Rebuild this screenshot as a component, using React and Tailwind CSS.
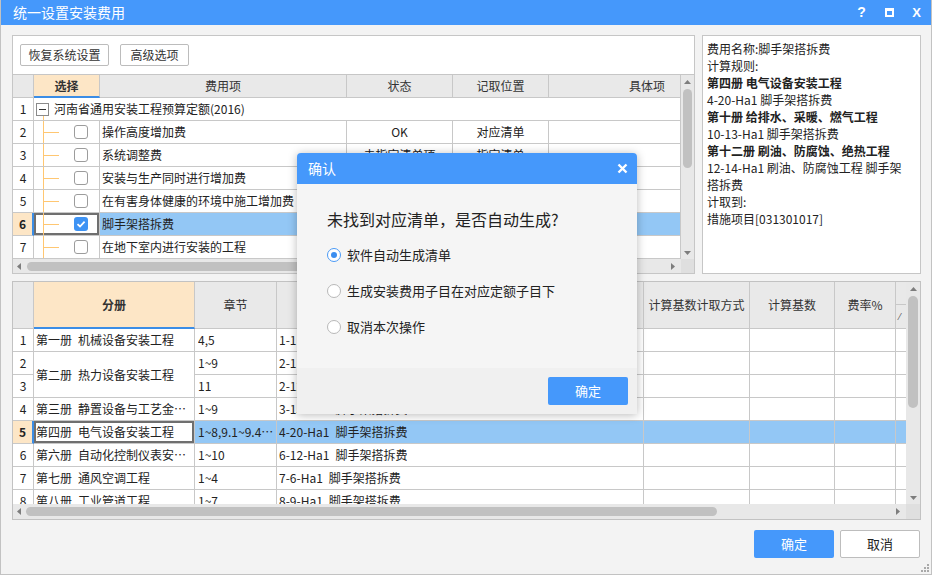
import React from "react";

const FONT = "font-['Noto_Sans_CJK_SC','Noto_Sans',sans-serif]";
const CELL = "border-r border-b border-[#c8c8c8] flex items-center overflow-hidden min-w-0";
const HEAD = "border-r border-b border-[#c8c8c8] flex items-center justify-center bg-[#e9e9e9] text-[#333]";
const ORANGE = "bg-[#fde6c6]";
const BLUE = "bg-[#93c7f5]";

function Tri({ dir }) {
  const pts = {
    up: "0,4 3.5,0 7,4",
    down: "0,0 7,0 3.5,4",
    left: "4,0 4,7 0,3.5",
    right: "0,0 0,7 4,3.5",
  }[dir];
  const v = dir === "up" || dir === "down";
  const w = v ? 7 : 4;
  const h = v ? 4 : 7;
  return (
    <svg width={w} height={h} viewBox={`0 0 ${w} ${h}`}>
      <polygon points={pts} fill="#7d7d7d" />
    </svg>
  );
}

function VScroll({ width, thumb }) {
  return (
    <div className={`${width} shrink-0 bg-[#e8e8e8] flex flex-col items-center`}>
      <div className="h-[13px] w-full flex items-center justify-center">
        <Tri dir="up" />
      </div>
      <div className="flex-1 w-full flex flex-col items-center">
        <div className={thumb} />
      </div>
      <div className="h-[13px] w-full flex items-center justify-center">
        <Tri dir="down" />
      </div>
    </div>
  );
}

function HScroll({ height, thumb, corner }) {
  return (
    <div className={`${height} shrink-0 flex`}>
      <div className="flex-1 bg-[#e8e8e8] flex items-center">
        <div className="w-[12px] flex justify-center">
          <Tri dir="left" />
        </div>
        <div className={thumb} />
        <div className="flex-1" />
        <div className="w-[16px] flex justify-center">
          <Tri dir="right" />
        </div>
      </div>
      <div className={`${corner} bg-[#dfdfdf]`} />
    </div>
  );
}

function Checkbox({ checked }) {
  if (checked) {
    return (
      <div className="w-[14px] h-[14px] rounded-[3px] bg-[#3e93f4] flex items-center justify-center shrink-0">
        <svg width="10" height="10" viewBox="0 0 10 10">
          <path d="M1.5 5.2 L4 7.5 L8.6 2.6" fill="none" stroke="white" strokeWidth="1.8" />
        </svg>
      </div>
    );
  }
  return <div className="w-[14px] h-[14px] rounded-[3px] border border-[#9c9c9c] bg-white shrink-0" />;
}

function Tree() {
  return (
    <svg width="26" height="23" className="shrink-0 self-start">
      <line x1="9.5" y1="0" x2="9.5" y2="23" stroke="#ffc772" />
      <line x1="9.5" y1="11.5" x2="25" y2="11.5" stroke="#ffc772" />
    </svg>
  );
}

function Radio({ on }) {
  if (on) {
    return (
      <div className="w-[14px] h-[14px] rounded-full border border-[#4a9af5] bg-white flex items-center justify-center shrink-0">
        <div className="w-[6px] h-[6px] rounded-full bg-[#3b8ef0]" />
      </div>
    );
  }
  return <div className="w-[14px] h-[14px] rounded-full border border-[#b8b8b8] bg-white shrink-0" />;
}

const upperRows = [
  { n: 2, name: "操作高度增加费", st: "OK", pos: "对应清单" },
  { n: 3, name: "系统调整费", st: "未指定清单项", pos: "指定清单" },
  { n: 4, name: "安装与生产同时进行增加费", st: "未指定清单项", pos: "指定清单" },
  { n: 5, name: "在有害身体健康的环境中施工增加费", st: "未指定清单项", pos: "指定清单" },
  { n: 6, name: "脚手架搭拆费", st: "", pos: "", sel: true },
  { n: 7, name: "在地下室内进行安装的工程", st: "未指定清单项", pos: "指定清单" },
];

function UpperTable() {
  return (
    <div className="w-[683px] h-[239px] shrink-0 border border-[#c6c6c6] bg-white flex flex-col">
      <div className="h-[38px] shrink-0 flex items-start pt-[8px] pl-[7px] gap-[11px]">
        <div className="w-[89px] h-[22px] border border-[#bcbcbc] rounded-[2px] bg-white flex items-center justify-center text-[#333]">
          恢复系统设置
        </div>
        <div className="w-[69px] h-[22px] border border-[#bcbcbc] rounded-[2px] bg-white flex items-center justify-center text-[#333]">
          高级选项
        </div>
      </div>
      <div className="h-[185px] shrink-0 flex border-t border-[#c6c6c6]">
        <div className="flex-1 overflow-hidden grid grid-cols-[21px_66px_247px_106px_96px_132px] auto-rows-[23px] content-start">
          <div className={HEAD} />
          <div className={`${HEAD} !bg-[#fde6c6] border-b-2 !border-b-[#3b8de6] font-bold`}>选择</div>
          <div className={HEAD}>费用项</div>
          <div className={HEAD}>状态</div>
          <div className={HEAD}>记取位置</div>
          <div className={`${HEAD} !justify-end pr-[15px]`}>具体项</div>

          <div className={`${CELL} justify-center`}>1</div>
          <div className={`${CELL} col-span-5 bg-white`}>
            <div className="relative w-[26px] h-full shrink-0 flex items-center">
              <svg width="26" height="22" className="absolute left-0 top-0">
                <line x1="9.5" y1="18" x2="9.5" y2="23" stroke="#ffc772" />
              </svg>
              <div className="relative ml-[2px] w-[13px] h-[13px] border border-[#8a8a8a] bg-white flex items-center justify-center">
                <div className="w-[7px] h-px bg-[#333]" />
              </div>
            </div>
            <span className="ml-[-6px]">河南省通用安装工程预算定额(2016)</span>
          </div>

          {upperRows.map((r) => (
            <React.Fragment key={r.n}>
              <div
                className={`${CELL} justify-center ${r.sel ? `${ORANGE} font-bold border-r-2 !border-r-[#3b8de6]` : "bg-white"}`}
              >
                {r.n}
              </div>
              <div className={`${CELL} bg-white ${r.sel ? "shadow-[inset_0_0_0_2px_#6f6f6f]" : ""}`}>
                <Tree />
                <div className="ml-[14px]">
                  <Checkbox checked={r.sel} />
                </div>
              </div>
              <div className={`${CELL} pl-[2px] whitespace-nowrap ${r.sel ? BLUE : "bg-white"}`}>{r.name}</div>
              <div className={`${CELL} justify-center whitespace-nowrap ${r.sel ? BLUE : "bg-white"}`}>{r.st}</div>
              <div className={`${CELL} justify-center whitespace-nowrap ${r.sel ? BLUE : "bg-white"}`}>{r.pos}</div>
              <div className={`${CELL} ${r.sel ? BLUE : "bg-white"}`} />
            </React.Fragment>
          ))}
        </div>
        <VScroll width="w-[13px]" thumb="mt-[1px] h-[79px] w-[9px] rounded-full bg-[#c1c1c1]" />
      </div>
      <HScroll
        height="h-[14px]"
        thumb="ml-[2px] w-[400px] h-[9px] rounded-full bg-[#c1c1c1]"
        corner="w-[13px]"
      />
    </div>
  );
}

function InfoPanel() {
  return (
    <div className="w-[219px] h-[239px] shrink-0 border border-[#c6c6c6] bg-white pt-[4px] pl-[4px] pr-[3px] text-[12px] leading-[17px] text-[#222]">
      <div>费用名称:脚手架搭拆费</div>
      <div>计算规则:</div>
      <div className="font-bold">第四册 电气设备安装工程</div>
      <div>4-20-Ha1 脚手架搭拆费</div>
      <div className="font-bold">第十册 给排水、采暖、燃气工程</div>
      <div>10-13-Ha1 脚手架搭拆费</div>
      <div className="font-bold">第十二册 刷油、防腐蚀、绝热工程</div>
      <div>
        12-14-Ha1 刷油、防腐蚀工程 脚手架
        <br />
        搭拆费
      </div>
      <div>计取到:</div>
      <div>措施项目[031301017]</div>
    </div>
  );
}

const lowerRows = [
  { n: 1, book: "第一册\u2002机械设备安装工程", ch: "4,5", item: "1-11-Ha1\u2002脚手架搭拆费" },
  { n: 2, book: "第二册\u2002热力设备安装工程", ch: "1~9", item: "2-11-Ha1\u2002脚手架搭拆费", span: true },
  { n: 3, book: null, ch: "11", item: "2-12-Ha1\u2002脚手架搭拆费" },
  { n: 4, book: "第三册\u2002静置设备与工艺金属结构制作安装工程", ch: "1~9", item: "3-15-Ha1\u2002脚手架搭拆费" },
  { n: 5, book: "第四册\u2002电气设备安装工程", ch: "1~8,9.1~9.4,10~14", item: "4-20-Ha1\u2002脚手架搭拆费", sel: true },
  { n: 6, book: "第六册\u2002自动化控制仪表安装工程", ch: "1~10", item: "6-12-Ha1\u2002脚手架搭拆费" },
  { n: 7, book: "第七册\u2002通风空调工程", ch: "1~4", item: "7-6-Ha1\u2002脚手架搭拆费" },
  { n: 8, book: "第八册\u2002工业管道工程", ch: "1~7", item: "8-9-Ha1\u2002脚手架搭拆费" },
];

const LCOLS = "grid grid-cols-[21px_161px_82px_367px_106px_85px_61px_10px]";

function LowerTable() {
  return (
    <div className="mt-[7px] w-[909px] h-[239px] shrink-0 border border-[#c2c2c2] bg-white flex flex-col">
      <div className="h-[222px] shrink-0 flex">
        <div className="flex-1 flex flex-col overflow-hidden">
          <div className={`${LCOLS} h-[47px] shrink-0`}>
            <div className={HEAD} />
            <div className={`${HEAD} !bg-[#fde6c6] border-b-2 !border-b-[#3b8de6] font-bold`}>分册</div>
            <div className={HEAD}>章节</div>
            <div className={HEAD}>费用项</div>
            <div className={HEAD}>计算基数计取方式</div>
            <div className={HEAD}>计算基数</div>
            <div className={HEAD}>费率%</div>
            <div className="border-b border-[#c8c8c8] bg-[#e9e9e9] flex flex-col">
              <div className="h-[23px] border-b border-[#c8c8c8]" />
              <div className="flex-1 flex items-center pl-[3px] text-[9px] text-[#555]">⁄</div>
            </div>
          </div>
          <div className={`${LCOLS} auto-rows-[23px] h-[175px] overflow-hidden content-start`}>
            {lowerRows.map((r) => {
              const bg = r.sel ? BLUE : "bg-white";
              return (
                <React.Fragment key={r.n}>
                  <div
                    className={`${CELL} justify-center ${r.sel ? `${ORANGE} font-bold border-r-2 !border-r-[#3b8de6]` : "bg-white"}`}
                  >
                    {r.n}
                  </div>
                  {r.book !== null && (
                    <div
                      className={`${CELL} pl-[2px] bg-white ${r.span ? "row-span-2" : ""} ${r.sel ? "shadow-[inset_0_0_0_2px_#6f6f6f]" : ""}`}
                    >
                      <span className="truncate">{r.book}</span>
                    </div>
                  )}
                  <div className={`${CELL} pl-[3px] ${bg}`}>
                    <span className="truncate">{r.ch}</span>
                  </div>
                  <div className={`${CELL} pl-[2px] ${bg}`}>
                    <span className="truncate">{r.item}</span>
                  </div>
                  <div className={`${CELL} ${bg}`} />
                  <div className={`${CELL} ${bg}`} />
                  <div className={`${CELL} ${bg}`} />
                  <div className={`border-b border-[#c8c8c8] ${bg}`} />
                </React.Fragment>
              );
            })}
          </div>
        </div>
        <VScroll width="w-[14px]" thumb="mt-[1px] h-[112px] w-[10px] rounded-full bg-[#c1c1c1]" />
      </div>
      <HScroll
        height="h-[15px]"
        thumb="ml-[1px] w-[691px] h-[9px] rounded-full bg-[#c1c1c1]"
        corner="w-[14px]"
      />
    </div>
  );
}

function Dialog() {
  return (
    <div className="absolute left-[296px] top-[153px] w-[340px] h-[261px] bg-[#f5f5f5] rounded-t-[4px] shadow-[0_1px_10px_rgba(0,0,0,0.28)] flex flex-col">
      <div className="h-[31px] shrink-0 bg-[#4598fb] rounded-t-[4px] flex items-center pl-[11px] pr-[9px] text-white text-[14px]">
        <span>确认</span>
        <svg className="ml-auto" width="11" height="11" viewBox="0 0 11 11">
          <path d="M1.5 1.5 L9.5 9.5 M9.5 1.5 L1.5 9.5" stroke="white" strokeWidth="2.4" />
        </svg>
      </div>
      <div className="flex-1 pl-[30px] pt-[24px]">
        <div className="text-[16px] leading-[22px] text-[#222]">未找到对应清单，是否自动生成?</div>
        <div className="mt-[14px] flex flex-col gap-[14px] text-[13px] text-[#222]">
          <div className="h-[22px] flex items-center gap-[6px]">
            <Radio on />
            <span>软件自动生成清单</span>
          </div>
          <div className="h-[22px] flex items-center gap-[6px]">
            <Radio />
            <span>生成安装费用子目在对应定额子目下</span>
          </div>
          <div className="h-[22px] flex items-center gap-[6px]">
            <Radio />
            <span>取消本次操作</span>
          </div>
        </div>
      </div>
      <div className="h-[46px] shrink-0 bg-[#f0f0f0] flex justify-end items-start pt-[9px] pr-[9px]">
        <div className="w-[80px] h-[28px] bg-[#4598fb] text-white rounded-[2px] text-[13px] flex items-center justify-center">
          确定
        </div>
      </div>
    </div>
  );
}

export default function App() {
  return (
    <div
      className={`relative w-[932px] h-[575px] bg-[#f3f3f3] border-x border-b border-[#c2c2c2] flex flex-col overflow-hidden ${FONT} text-[12px] text-[#222]`}
    >
      <div className="h-[25px] shrink-0 bg-[#4598fb] flex items-center pl-[12px] pr-[10px] text-white">
        <span className="text-[14px]">统一设置安装费用</span>
        <div className="ml-auto flex items-center">
          <span className="w-[9px] text-center font-bold text-[14px] font-['Liberation_Sans',sans-serif]">?</span>
          <span className="ml-[19px] w-[9px] h-[9px] border-2 border-t-[3px] border-white" />
          <span className="ml-[18px] w-[9px] text-center font-bold text-[13px] font-['Liberation_Sans',sans-serif]">X</span>
        </div>
      </div>

      <div className="flex-1 flex flex-col px-[11px] pt-[10px]">
        <div className="flex gap-[7px]">
          <UpperTable />
          <InfoPanel />
        </div>
        <LowerTable />
        <div className="mt-[10px] flex justify-end gap-[6px]">
          <div className="w-[80px] h-[28px] bg-[#4598fb] text-white rounded-[2px] text-[13px] flex items-center justify-center">
            确定
          </div>
          <div className="w-[80px] h-[28px] bg-white border border-[#bdbdbd] rounded-[2px] text-[13px] text-[#222] flex items-center justify-center">
            取消
          </div>
        </div>
      </div>

      <svg className="absolute right-[1px] bottom-[1px]" width="10" height="10" viewBox="0 0 10 10">
        <rect x="7" y="1" width="2" height="2" fill="#a9a9a9" />
        <rect x="4" y="4" width="2" height="2" fill="#a9a9a9" />
        <rect x="7" y="4" width="2" height="2" fill="#a9a9a9" />
        <rect x="1" y="7" width="2" height="2" fill="#a9a9a9" />
        <rect x="4" y="7" width="2" height="2" fill="#a9a9a9" />
        <rect x="7" y="7" width="2" height="2" fill="#a9a9a9" />
      </svg>

      <Dialog />
    </div>
  );
}
